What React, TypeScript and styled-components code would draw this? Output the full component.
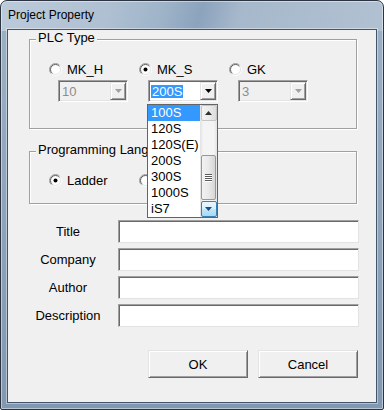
import React from "react";
import styled, { createGlobalStyle } from "styled-components";

const Global = createGlobalStyle`
  html, body { margin: 0; padding: 0; background: #fff; }
  body { font-family: "Liberation Sans", Arial, sans-serif; font-size: 13px; color: #000; }
  * { box-sizing: border-box; }
`;

const Window = styled.div`
  width: 384px;
  height: 410px;
  border: 1px solid #2b3440;
  border-radius: 7px 7px 2px 2px;
  background:
    linear-gradient(105deg, #bccbda 0%, #afc0d2 28%, #9fb4c9 42%, #8ca3bd 52%, #a6b8cb 62%, #b1c1d2 100%) top left / 100% 30px no-repeat,
    linear-gradient(180deg, #9db1c6, #8198b1);
  box-shadow: inset 0 0 0 1px rgba(255, 255, 255, 0.45);
  display: flex;
  flex-direction: column;
  overflow: hidden;
`;

const TitleBar = styled.div`
  height: 28px;
  flex: none;
  display: flex;
  align-items: center;
  padding-left: 7px;
  font-size: 12px;
  color: #000;
`;

const Client = styled.div`
  margin: 0 6px;
  height: 374px;
  flex: none;
  border: 1px solid #44546a;
  box-shadow: 0 0 0 1px rgba(255, 255, 255, 0.4);
  background: #f0f0f0;
  display: flex;
  flex-direction: column;
  align-items: flex-start;
  padding: 9px 0 0 21px;
`;

const Group = styled.div<{ $h: number; $mt?: number; $pt: number }>`
  position: relative;
  width: 328px;
  height: ${(p) => p.$h}px;
  margin-top: ${(p) => p.$mt ?? 0}px;
  border: 1px solid #a0a0a0;
  box-shadow: inset 1px 1px 0 #fff, 1px 1px 0 #fff;
  padding: ${(p) => p.$pt}px 0 0 19px;
`;

const Legend = styled.span`
  position: absolute;
  top: -10px;
  left: 6px;
  padding: 0 2px;
  background: #f0f0f0;
  font-size: 13px;
  line-height: 16px;
  white-space: nowrap;
`;

const Cols = styled.div`
  display: grid;
  grid-template-columns: repeat(3, 90px);
`;

const Col = styled.div`
  display: flex;
  flex-direction: column;
  align-items: flex-start;
  gap: 4px;
`;

const RadioRow = styled.div`
  height: 13px;
  display: flex;
  align-items: center;
  gap: 5px;
  font-size: 13px;
  line-height: 15px;
  white-space: nowrap;
`;

const Combo = styled.div<{ $disabled?: boolean }>`
  position: relative;
  width: 70px;
  height: 22px;
  margin-left: 9px;
  display: flex;
  align-items: center;
  border: 1px solid;
  border-color: #a0a0a0 #fff #fff #a0a0a0;
  box-shadow: inset 1px 1px 0 #696969, inset -1px -1px 0 #e3e3e3;
  background: ${(p) => (p.$disabled ? "#f0f0f0" : "#fff")};
  padding: 1px 1px 1px 2px;
`;

const ComboText = styled.span<{ $disabled?: boolean; $selected?: boolean }>`
  flex: 1;
  display: flex;
  font-size: 13px;
  line-height: 13px;
  & > span {
    padding: 0 1px;
    color: ${(p) => (p.$disabled ? "#8d8d8d" : p.$selected ? "#fff" : "#000")};
    background: ${(p) => (p.$selected ? "#3399ff" : "transparent")};
  }
`;

const DropBtn = styled.div`
  width: 16px;
  height: 18px;
  flex: none;
  border: 1px solid;
  border-color: #e3e3e3 #696969 #696969 #e3e3e3;
  box-shadow: inset 1px 1px 0 #fff, inset -1px -1px 0 #a0a0a0;
  background: #f0f0f0;
  display: flex;
  align-items: center;
  justify-content: center;
`;

const ListPopup = styled.div`
  position: absolute;
  left: -2px;
  top: 23px;
  width: 71px;
  z-index: 10;
  border: 1px solid #646464;
  background: #fff;
  display: flex;
`;

const Items = styled.div`
  flex: 1;
  display: flex;
  flex-direction: column;
`;

const Item = styled.div<{ $active?: boolean }>`
  height: 16px;
  line-height: 16px;
  padding-left: 3px;
  font-size: 13px;
  white-space: nowrap;
  color: ${(p) => (p.$active ? "#fff" : "#000")};
  background: ${(p) => (p.$active ? "#3399ff" : "transparent")};
`;

const ScrollBar = styled.div`
  width: 17px;
  flex: none;
  display: flex;
  flex-direction: column;
  align-items: center;
  background: linear-gradient(90deg, #e3e3e3 0%, #f4f4f4 20%, #f4f4f4 80%, #e3e3e3 100%);
`;

const ScrollBtn = styled.div<{ $hover?: boolean }>`
  width: 16px;
  height: 16px;
  flex: none;
  border: 1px solid ${(p) => (p.$hover ? "#3c7fb1" : "#c5c5c5")};
  border-radius: 2px;
  background: ${(p) =>
    p.$hover
      ? "linear-gradient(180deg, #eaf6fd 0%, #d9f0fc 45%, #bee6fd 55%, #a7d9f5 100%)"
      : "linear-gradient(90deg, #f3f3f3 0%, #ebebeb 50%, #dcdcdc 100%)"};
  display: flex;
  align-items: center;
  justify-content: center;
`;

const ScrollSpace = styled.div<{ $h?: number }>`
  height: ${(p) => (p.$h ? `${p.$h}px` : "auto")};
  flex: ${(p) => (p.$h ? "none" : "1")};
`;

const Thumb = styled.div`
  width: 15px;
  height: 45px;
  flex: none;
  border: 1px solid #979797;
  border-radius: 2px;
  background: linear-gradient(90deg, #f2f2f2 0%, #e9e9e9 50%, #d6d6d6 100%);
  display: flex;
  flex-direction: column;
  align-items: center;
  justify-content: center;
  gap: 1px;
`;

const Grip = styled.div`
  width: 7px;
  height: 1px;
  background: #5a5a5a;
  box-shadow: 0 1px 0 #fff;
`;

const Fields = styled.div`
  display: grid;
  grid-template-columns: 80px 241px;
  column-gap: 10px;
  row-gap: 5px;
  margin-top: 16px;
  margin-left: -1px;
`;

const FieldLabel = styled.div`
  height: 23px;
  display: flex;
  align-items: center;
  justify-content: center;
  font-size: 13px;
`;

const Input = styled.div`
  height: 23px;
  border: 1px solid;
  border-color: #a0a0a0 #e3e3e3 #e3e3e3 #a0a0a0;
  box-shadow: inset 1px 1px 0 #696969;
  background: #fff;
`;

const Buttons = styled.div`
  display: flex;
  gap: 10px;
  margin-top: 23px;
  margin-left: 119px;
`;

const Button = styled.button`
  width: 100px;
  height: 28px;
  padding: 0;
  font: 13px "Liberation Sans", Arial, sans-serif;
  color: #000;
  background: #f0f0f0;
  border: 1px solid;
  border-color: #e3e3e3 #696969 #696969 #e3e3e3;
  box-shadow: inset 1px 1px 0 #fff, inset -1px -1px 0 #a0a0a0;
`;

const RadioIcon: React.FC<{ checked?: boolean }> = ({ checked }) => (
  <svg width="13" height="13" viewBox="0 0 13 13">
    <defs>
      <linearGradient id="radOuter" x1="0" y1="0" x2="1" y2="1">
        <stop offset="0.4" stopColor="#9a9a9a" />
        <stop offset="0.6" stopColor="#ffffff" />
      </linearGradient>
      <linearGradient id="radInner" x1="0" y1="0" x2="1" y2="1">
        <stop offset="0.4" stopColor="#5a5a5a" />
        <stop offset="0.6" stopColor="#e3e3e3" />
      </linearGradient>
    </defs>
    <circle cx="6.5" cy="6.5" r="6" fill="none" stroke="url(#radOuter)" strokeWidth="1" />
    <circle cx="6.5" cy="6.5" r="5" fill="#fff" stroke="url(#radInner)" strokeWidth="1" />
    {checked && <circle cx="6.5" cy="6.5" r="2" fill="#000" />}
  </svg>
);

const Arrow: React.FC<{ color?: string; up?: boolean }> = ({ color = "#000", up }) => (
  <svg width="7" height="4" viewBox="0 0 7 4">
    <path d={up ? "M0 4 L3.5 0 L7 4 Z" : "M0 0 L7 0 L3.5 4 Z"} fill={color} />
  </svg>
);

const Radio: React.FC<{ label: string; checked?: boolean }> = ({ label, checked }) => (
  <RadioRow>
    <RadioIcon checked={checked} />
    <span>{label}</span>
  </RadioRow>
);

const listItems = ["100S", "120S", "120S(E)", "200S", "300S", "1000S", "iS7"];

export default function App() {
  return (
    <>
      <Global />
      <Window>
        <TitleBar>Project Property</TitleBar>
        <Client>
          <Group $h={90} $pt={23}>
            <Legend>PLC Type</Legend>
            <Cols>
              <Col>
                <Radio label="MK_H" />
                <Combo $disabled>
                  <ComboText $disabled>
                    <span>10</span>
                  </ComboText>
                  <DropBtn>
                    <Arrow color="#a0a0a0" />
                  </DropBtn>
                </Combo>
              </Col>
              <Col>
                <Radio label="MK_S" checked />
                <Combo>
                  <ComboText $selected>
                    <span>200S</span>
                  </ComboText>
                  <DropBtn>
                    <Arrow />
                  </DropBtn>
                  <ListPopup>
                    <Items>
                      {listItems.map((it, i) => (
                        <Item key={it} $active={i === 0}>
                          {it}
                        </Item>
                      ))}
                    </Items>
                    <ScrollBar>
                      <ScrollBtn>
                        <Arrow up color="#303030" />
                      </ScrollBtn>
                      <ScrollSpace $h={34} />
                      <Thumb>
                        <Grip />
                        <Grip />
                        <Grip />
                        <Grip />
                      </Thumb>
                      <ScrollSpace />
                      <ScrollBtn $hover>
                        <Arrow color="#1d4f7a" />
                      </ScrollBtn>
                    </ScrollBar>
                  </ListPopup>
                </Combo>
              </Col>
              <Col>
                <Radio label="GK" />
                <Combo $disabled>
                  <ComboText $disabled>
                    <span>3</span>
                  </ComboText>
                  <DropBtn>
                    <Arrow color="#a0a0a0" />
                  </DropBtn>
                </Combo>
              </Col>
            </Cols>
          </Group>

          <Group $h={53} $mt={22} $pt={22}>
            <Legend>Programming Language</Legend>
            <Cols>
              <Col>
                <Radio label="Ladder" checked />
              </Col>
              <Col>
                <Radio label="IL" />
              </Col>
            </Cols>
          </Group>

          <Fields>
            <FieldLabel>Title</FieldLabel>
            <Input />
            <FieldLabel>Company</FieldLabel>
            <Input />
            <FieldLabel>Author</FieldLabel>
            <Input />
            <FieldLabel>Description</FieldLabel>
            <Input />
          </Fields>

          <Buttons>
            <Button>OK</Button>
            <Button>Cancel</Button>
          </Buttons>
        </Client>
      </Window>
    </>
  );
}
